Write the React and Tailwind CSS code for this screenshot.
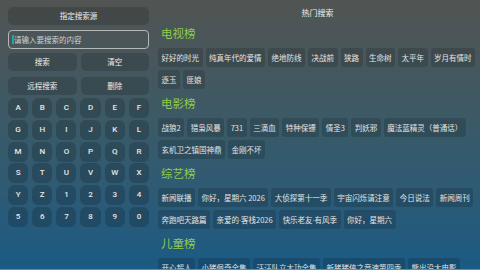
const keys = "ABCDEFGHIJKLMNOPQRSTUVWXYZ1234567890".split("");

const sections = [
  {
    title: "电视榜",
    items: ["好好的时光", "纯真年代的爱情", "绝地防线", "决战前", "狭路", "生命树", "太平年", "岁月有情时", "逐玉", "匪娘"],
  },
  {
    title: "电影榜",
    items: ["战狼2", "猎枭风暴", "731", "三滴血", "特种保镖", "情圣3", "判妖邪", "魔法蓝精灵（普通话）", "玄机卫之镇国神鼎", "金刚不坏"],
  },
  {
    title: "综艺榜",
    items: ["新闻联播", "你好，星期六 2026", "大侦探第十一季", "宇宙闪烁请注意", "今日说法", "新闻周刊", "奔跑吧天路篇", "亲爱的·客栈2026", "快乐老友·有风季", "你好，星期六"],
  },
  {
    title: "儿童榜",
    items: ["开心超人", "小猪佩奇全集", "汪汪队立大功全集", "新猪猪侠之竞速第四季", "熊出没大电影"],
  },
];

// the middle dot renders full width in the CJK font, the reference has it narrow
const label = (t) =>
  t.split("·").flatMap((part, i) =>
    i === 0
      ? [part]
      : [
          <span key={i} className="font-['Roboto',sans-serif]">
            ·
          </span>,
          part,
        ]
  );

const Btn = ({ children, className = "" }) => (
  <div
    className={`h-[18px] rounded-[5px] bg-black/15 flex items-center justify-center text-[7.5px] text-[#eeeeee] ${className}`}
  >
    {children}
  </div>
);

export default function App() {
  return (
    <div className="w-[480px] h-[270px] overflow-hidden flex flex-col bg-gradient-to-b from-[#515452] via-[#385a69] to-[#1a5a84] font-['Noto_Sans_CJK_SC',sans-serif]">
      <div className="flex-1 flex min-h-0">
        {/* left: search box + keyboard */}
        <div className="w-[158px] shrink-0 pl-[8px] pr-[9px] pt-[7px] flex flex-col">
          <Btn>指定搜索源</Btn>
          <div className="mt-[5px] h-[19px] rounded-[4px] border border-[#b4b8b6] flex items-center pl-[3px]">
            <span className="w-[1.5px] h-[9px] bg-[#26a69a] mr-[0.5px]" />
            <span className="text-[7.5px] text-[#cfd2d0]">请输入要搜索的内容</span>
          </div>
          <div className="mt-[4px] grid grid-cols-2 gap-x-[4px] gap-y-[6px]">
            <Btn>搜索</Btn>
            <Btn>清空</Btn>
            <Btn>远程搜索</Btn>
            <Btn>删除</Btn>
          </div>
          <div className="mt-[3px] grid grid-cols-6 gap-x-[4px] gap-y-[1.8px]">
            {keys.map((k) => (
              <div
                key={k}
                className="h-[20px] rounded-[6px] bg-black/[0.17] flex items-center justify-center text-[8px] font-medium text-[#e8e8e8] font-['Roboto',sans-serif]"
              >
                {k}
              </div>
            ))}
          </div>
        </div>

        {/* right: hot search lists */}
        <div className="flex-1 min-w-0 pr-[3px] overflow-hidden">
          <div className="pt-[6px] h-[23px] text-center text-[8px] leading-[14px] text-[#eeeeee]">热门搜索</div>
          {sections.map((s) => (
            <div key={s.title} className="mb-[4px]">
              <div className="h-[20px] mb-[5px] pl-[3px] text-[11.5px] leading-[20px] text-[#8fcb4e]">{s.title}</div>
              <div className="flex flex-wrap gap-x-[3px] gap-y-[3px]">
                {s.items.map((t) => (
                  <span
                    key={t}
                    className="h-[19px] px-[3.5px] rounded-[3px] bg-black/15 text-[7.5px] leading-[19px] text-[#e4e4e4] whitespace-nowrap"
                  >
                    {label(t)}
                  </span>
                ))}
              </div>
            </div>
          ))}
        </div>
      </div>
      <div className="h-[1px] bg-white/30" />
    </div>
  );
}
